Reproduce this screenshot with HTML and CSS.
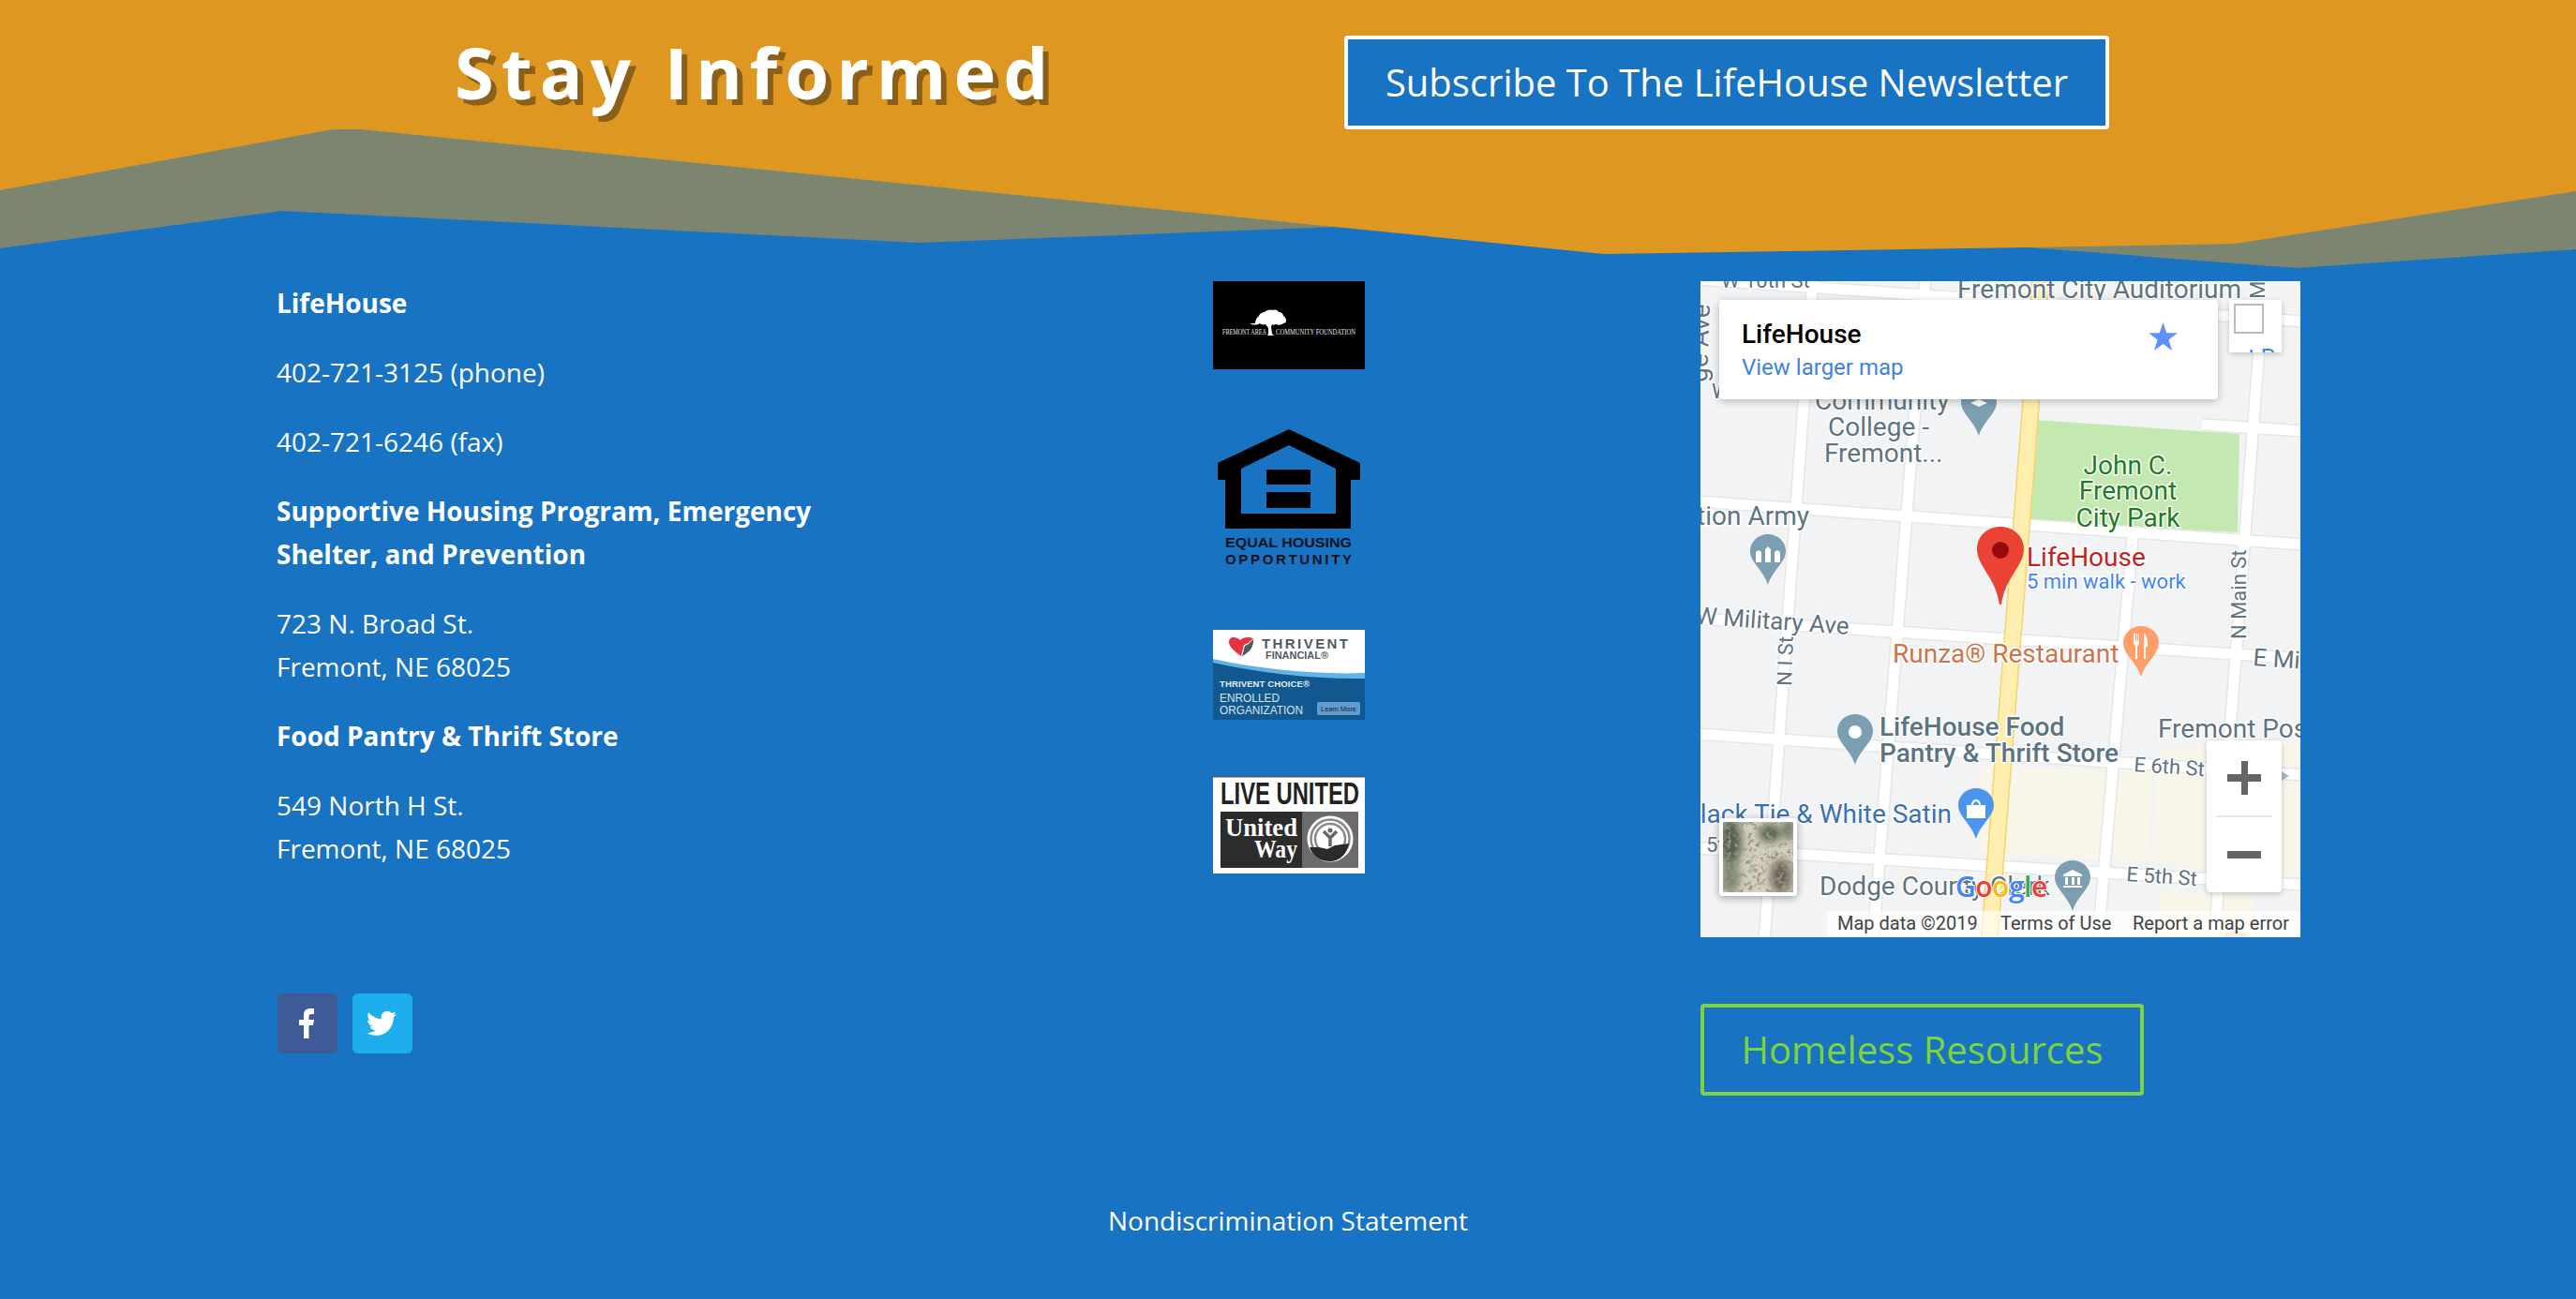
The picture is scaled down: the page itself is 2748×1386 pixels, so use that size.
FILE: index.html
```html
<!DOCTYPE html>
<html lang="en">
<head>
<meta charset="utf-8">
<title>LifeHouse</title>
<link rel="stylesheet" href="styles.css">
</head>
<body>
<header class="hero">
  <svg class="hero-bg" viewBox="0 0 2748 300" preserveAspectRatio="none" aria-hidden="true">
    <rect class="c-orange" width="2748" height="300"/>
    <polygon class="c-gray" points="0,203 355,138 385,138 1374,237 1711,271 2384,260 2748,204 2748,300 0,300"/>
    <polygon class="c-blue" points="0,265 301,225 980,259 1374,244 1600,236 2163,264 2450,286 2748,266 2748,300 0,300"/>
    <polygon class="c-orange" points="1374,237 1711,271 2162,264 2384,260 2384,150 1374,150"/>
  </svg>
  <h1 class="hero-title">Stay Informed</h1>
  <a class="btn btn-subscribe" href="#">Subscribe To The LifeHouse Newsletter</a>
</header>

<main class="columns">
  <section class="col-text">
    <p><strong>LifeHouse</strong></p>
    <p>402-721-3125 (phone)</p>
    <p>402-721-6246 (fax)</p>
    <p><strong>Supportive Housing Program, Emergency Shelter, and Prevention</strong></p>
    <p>723 N. Broad St.<br>Fremont, NE 68025</p>
    <p><strong>Food Pantry &amp; Thrift Store</strong></p>
    <p>549 North H St.<br>Fremont, NE 68025</p>
    <ul class="social">
      <li class="social-item fb">
        <svg viewBox="0 0 64 64"><path class="white" d="M28 48V34h-5v-6h5v-5c0-5 3-7 7-7h4v6h-3c-2 0-2.500 1-2.500 2.500V28H39l-1 6h-4.500v14z"/></svg>
      </li>
      <li class="social-item tw">
        <svg viewBox="0 0 64 64"><path class="white" transform="translate(15 16) scale(1.333)" d="M23.953 4.570a10 10 0 01-2.825.775 4.958 4.958 0 002.163-2.723c-.951.555-2.005.959-3.127 1.184a4.920 4.920 0 00-8.384 4.482C7.690 8.095 4.067 6.130 1.640 3.162a4.822 4.822 0 00-.666 2.475c0 1.710.870 3.213 2.188 4.096a4.904 4.904 0 01-2.228-.616v.060a4.923 4.923 0 003.946 4.827 4.996 4.996 0 01-2.212.085 4.936 4.936 0 004.604 3.417 9.867 9.867 0 01-6.102 2.105c-.390 0-.779-.023-1.170-.067a13.995 13.995 0 007.557 2.209c9.053 0 13.998-7.496 13.998-13.985 0-.210 0-.420-.015-.630A9.935 9.935 0 0024 4.590z"/></svg>
      </li>
    </ul>
  </section>

  <section class="col-logos">
    <svg class="logo logo-fremont" viewBox="0 0 162 94">
      <rect width="162" height="94"/>
      <g class="white">
        <path d="M45 45c0-4 2-6 4-8 1-3 4-4 6-4 2-2 6-3 9-2 3-1 5 0 6 2 3 0 5 2 5 4 2 1 3 3 3 5 0 2-1 3-3 3-2 2-5 2-8 1-2 1-3 1-4 0l-1 3 1 7 2 2h-7l1-2 0-6-3-4c-3 1-5 0-6-1-3 2-8 2-10 0-1 1-1 1-1 0z"/>
        <text class="fr-text" x="10" y="57" textLength="47" lengthAdjust="spacingAndGlyphs">FREMONT AREA</text>
        <text class="fr-text" x="67" y="57" textLength="85" lengthAdjust="spacingAndGlyphs">COMMUNITY FOUNDATION</text>
      </g>
    </svg>

    <svg class="logo logo-eho" viewBox="0 0 162 150">
      <path class="black" fill-rule="evenodd" d="M81 0L157 36V54H147V106H13V54H5V36ZM81 17L30 42V90H131V42ZM57 43H104V59H57ZM57 67H104V84H57Z"/>
      <text class="eho-text" x="13" y="126" textLength="135" lengthAdjust="spacingAndGlyphs">EQUAL HOUSING</text>
      <text class="eho-text" x="13" y="144" textLength="135">OPPORTUNITY</text>
    </svg>

    <svg class="logo logo-thrivent" viewBox="0 0 162 96">
      <rect class="th-white" width="162" height="96"/>
      <path class="th-blue" d="M0 32C50 43 110 50 162 48V96H0Z"/>
      <path class="th-light" d="M0 31C50 42 110 48 162 46V52C110 53 50 46 0 35Z"/>
      <path class="th-red" d="M30 28C24 24 17 18 17 13 17 8 23 6 29 11 32 8 37 7 43 9L38 14 33 16Z"/>
      <path class="th-gray" d="M31 28L34 17 38 15 43 10C44 18 38 25 31 28Z"/>
      <text class="th-name" x="52" y="20" textLength="92">THRIVENT</text>
      <text class="th-fin" x="56" y="31" textLength="67" lengthAdjust="spacingAndGlyphs">FINANCIAL®</text>
      <text class="th-choice" x="7" y="61" textLength="96">THRIVENT CHOICE®</text>
      <text class="th-enr" x="7" y="77" textLength="64" lengthAdjust="spacingAndGlyphs">ENROLLED</text>
      <text class="th-enr" x="7" y="90" textLength="89" lengthAdjust="spacingAndGlyphs">ORGANIZATION</text>
      <rect class="th-btn" x="111" y="77" width="46" height="14" rx="2"/>
      <text class="th-learn" x="115" y="87" textLength="38" lengthAdjust="spacingAndGlyphs">Learn More</text>
    </svg>

    <svg class="logo logo-united" viewBox="0 0 162 104">
      <rect class="white" width="162" height="104"/>
      <rect class="uw-edge" width="162" height="1.500"/>
      <text class="uw-live" x="8" y="30" textLength="148" lengthAdjust="spacingAndGlyphs">LIVE UNITED</text>
      <rect class="uw-dark" x="8" y="38" width="87" height="60"/>
      <rect class="uw-mid" x="95" y="38" width="60" height="60"/>
      <text class="uw-name" x="13" y="64" textLength="77" lengthAdjust="spacingAndGlyphs">United</text>
      <text class="uw-name" x="44" y="87" textLength="46" lengthAdjust="spacingAndGlyphs">Way</text>
      <circle class="white" cx="125" cy="67" r="24.500"/>
      <circle class="uw-arc" cx="125" cy="67" r="20.500"/>
      <circle class="uw-arc" cx="125" cy="67" r="16"/>
      <circle class="white" cx="125" cy="67" r="12"/>
      <path class="uw-hand" d="M103 76H113L122 78 130 74 145 72C143 83 135 91 125 91 114 91 106 85 103 76Z"/>
      <circle class="uw-head" cx="125" cy="58" r="2.500"/>
      <path class="uw-person" d="M118 59L125 66 132 59M125 66V75"/>
    </svg>
  </section>

  <section class="col-map">
    <div class="map">
      <svg class="map-canvas" viewBox="0 0 640 700">
        <defs>
          <g id="roads">
            <line x1="-5" y1="-2" x2="645" y2="43"/>
            <line x1="-5" y1="235" x2="645" y2="281"/>
            <line x1="-5" y1="360" x2="645" y2="403"/>
            <line x1="-5" y1="483" x2="645" y2="527"/>
            <line x1="-5" y1="605" x2="645" y2="644"/>
            <line x1="120" y1="-5" x2="68" y2="705"/>
            <line x1="240" y1="-5" x2="184" y2="705"/>
            <line x1="462" y1="262" x2="424" y2="705"/>
            <line x1="596" y1="70" x2="548" y2="705"/>
            <line x1="535" y1="153" x2="645" y2="160"/>
          </g>
          <path id="pin" d="M19 0C8.500 0 0 8 0 18c0 12 14 20 19 36 5-16 19-24 19-36C38 8 29.500 0 19 0z"/>
        </defs>

        <rect class="m-land" width="640" height="700"/>
        <polygon class="m-built" points="300,517 435,523 430,617 296,610"/>
        <polygon class="m-built" points="445,520 483,523 477,620 440,617"/>
        <polygon class="m-built" points="490,500 640,490 640,640 480,620"/>
        <polygon class="m-built" points="490,650 590,655 590,700 486,700"/>
        <polygon class="m-park" points="356,148 575,163 573,268 348,257"/>
        <use href="#roads" class="m-road-edge"/>
        <use href="#roads" class="m-road"/>
        <line class="m-major-edge" x1="363" y1="-5" x2="308" y2="705"/>
        <line class="m-major" x1="363" y1="-5" x2="308" y2="705"/>
        <polygon class="m-arrow" points="620,523 628,528 620,533"/>

        <text class="m-label m-sm" x="22" y="7">W 10th St</text>
        <text class="m-label" x="274" y="18">Fremont City Auditorium</text>
        <text class="m-label m-sm" transform="translate(602 40) rotate(-90)">N M</text>
        <text class="m-label" transform="translate(7 108) rotate(-88)">ge Ave</text>
        <text class="m-label m-sm" x="12" y="125">W Street</text>
        <text class="m-label" x="122" y="137">Community</text>
        <text class="m-label" x="136" y="165">College -</text>
        <text class="m-label" x="132" y="193">Fremont...</text>
        <g class="m-park-label">
          <text x="456" y="206">John C.</text>
          <text x="456" y="233">Fremont</text>
          <text x="456" y="262">City Park</text>
        </g>
        <text class="m-label m-end" x="116" y="260">Salvation Army</text>
        <text class="m-label m-md m-end" transform="translate(158 377) rotate(4)">W Military Ave</text>
        <text class="m-label m-sm" transform="translate(582 382) rotate(-90)">N Main St</text>
        <text class="m-label m-sm" transform="translate(97 432) rotate(-88)">N I St</text>
        <text class="m-runza" x="205" y="407">Runza® Restaurant</text>
        <text class="m-label m-md" transform="translate(589 410) rotate(4)">E Mi</text>
        <text class="m-label m-bold" x="191" y="485">LifeHouse Food</text>
        <text class="m-label m-bold" x="191" y="513">Pantry &amp; Thrift Store</text>
        <text class="m-label" x="488" y="487">Fremont Post</text>
        <text class="m-label m-sm" transform="translate(462 523) rotate(4)">E 6th St</text>
        <text class="m-shop m-end" x="268" y="578">Black Tie &amp; White Satin</text>
        <text class="m-label m-sm" x="6" y="609">5th</text>
        <text class="m-label" x="127" y="655">Dodge County Clerk</text>
        <text class="m-label m-sm" transform="translate(454 640) rotate(4)">E 5th St</text>
        <text class="m-place" x="348" y="304">LifeHouse</text>
        <text class="m-walk" x="348" y="328">5 min walk - work</text>

        <use href="#pin" class="p-slate" x="278" y="111" width="38" height="52"/>
        <path class="white" d="M288 130l9-4 9 4-9 4z"/>
        <use href="#pin" class="p-slate" x="53" y="270" width="38" height="52"/>
        <path class="white" d="M59 300v-11l3-2 3 2v11zM69 300v-14l3-3 3 3v14zM79 300v-11l3-2 3 2v11z"/>
        <use href="#pin" class="p-orange" x="451" y="368" width="38" height="54"/>
        <path class="white" d="M462 376v10c0 2 2 2.500 2 4v13h2v-13c0-1.500 2-2 2-4v-10h-1v8h-1v-8h-1v8h-1v-8zM473 376c3 1 4 6 4 14h-2v13h-2z"/>
        <use href="#pin" class="p-slate" x="146" y="462" width="38" height="52"/>
        <circle class="white" cx="165" cy="481" r="7"/>
        <use href="#pin" class="p-blue" x="275" y="541" width="38" height="54"/>
        <path class="white" d="M284 559h20v14h-20zM289 559c0-8 10-8 10 0h-2c0-5-6-5-6 0z"/>
        <use href="#pin" class="p-slate" x="378" y="618" width="38" height="52"/>
        <path class="white" d="M397 628l10 5v2h-20v-2zM389 636h3v8h-3zM396 636h3v8h-3zM402 636h3v8h-3zM387 645h20v2h-20z"/>

        <path class="p-red" d="M320 262c-14 0-25 10-25 24 0 18 20 30 24 59h2c4-29 24-41 24-59 0-14-11-24-25-24z"/>
        <circle class="p-red-dot" cx="320" cy="287" r="9"/>

        <use href="#pin" class="p-faint" x="552" y="693" width="38" height="52"/>
        <rect class="m-attr" x="135" y="672" width="505" height="28"/>
        <text class="m-attr-text" x="146" y="692">Map data ©2019</text>
        <text class="m-attr-text" x="320" y="692">Terms of Use</text>
        <text class="m-attr-text" x="461" y="692">Report a map error</text>
        <text class="m-google" x="272" y="657"><tspan class="g-b">G</tspan><tspan class="g-r">o</tspan><tspan class="g-y">o</tspan><tspan class="g-b">g</tspan><tspan class="g-g">l</tspan><tspan class="g-r">e</tspan></text>
      </svg>

      <div class="map-card">
        <div class="map-card-title">LifeHouse</div>
        <div class="map-card-link">View larger map</div>
        <svg class="map-star" viewBox="0 0 31 30"><polygon points="15.500,0 19.300,11.200 31,11.200 21.500,18.500 25,30 15.500,23 6,30 9.500,18.500 0,11.200 11.700,11.200"/></svg>
      </div>
      <div class="map-full"><span class="map-full-box"></span><span class="map-full-peek">t P</span></div>
      <div class="map-zoom">
        <svg viewBox="0 0 80 162"><path class="z-sign" d="M22 36h15V22h7v14h14v8H44v14h-7V44H22zM22 118h36v8H22z"/><rect class="z-div" x="10" y="80" width="60" height="2"/></svg>
      </div>
      <div class="map-thumb">
        <svg viewBox="0 0 75 75">
          <defs>
            <filter id="sat" x="0" y="0" width="100%" height="100%"><feTurbulence type="fractalNoise" baseFrequency="0.22" numOctaves="3" seed="11"/><feColorMatrix values="0 0 0 0 .3  0 0 0 0 .31  0 0 0 0 .25  2.600 2.600 0 0 -2.500"/></filter>
            <filter id="soft" x="-30%" y="-30%" width="160%" height="160%"><feGaussianBlur stdDeviation="4"/></filter>
          </defs>
          <rect class="t-base" width="75" height="75"/>
          <g filter="url(#soft)">
            <ellipse class="t-green" cx="8" cy="22" rx="12" ry="26"/>
            <ellipse class="t-green" cx="50" cy="12" rx="12" ry="10"/>
            <ellipse class="t-green" cx="70" cy="8" rx="5" ry="12"/>
            <ellipse class="t-brown" cx="62" cy="58" rx="11" ry="18"/>
            <ellipse class="t-green-soft" cx="8" cy="58" rx="10" ry="18"/>
          </g>
          <rect width="75" height="75" filter="url(#sat)"/>
        </svg>
      </div>
    </div>
    <a class="btn btn-homeless" href="#">Homeless Resources</a>
  </section>
</main>

<footer class="foot">Nondiscrimination Statement</footer>
</body>
</html>
```

FILE: styles.css
```css
* { box-sizing: border-box; }
html, body { margin: 0; padding: 0; }
body {
  width: 2748px;
  height: 1386px;
  overflow: hidden;
  background: #1873c2;
  color: #fff;
  font-family: "Open Sans", sans-serif;
  font-size: 28px;
  line-height: 46px;
}
.white { fill: #fff; }
.black { fill: #000; }

/* hero */
.hero {
  position: relative;
  height: 290px;
  display: grid;
  grid-template-columns: 949px 816px;
  align-items: start;
  padding-left: 485px;
}
.hero-bg { position: absolute; left: 0; top: 0; width: 2748px; height: 300px; }
.c-orange { fill: #de9822; }
.c-gray { fill: #7c8570; }
.c-blue { fill: #1873c2; }
.hero-title {
  position: relative;
  margin: 27px 0 0;
  font-size: 76px;
  line-height: 100px;
  font-weight: 700;
  letter-spacing: 8px;
  white-space: nowrap;
  text-shadow: 6px 6px 0 #8a5f1a;
}
.btn {
  position: relative;
  display: flex;
  align-items: center;
  justify-content: center;
  height: 100px;
  font-size: 40px;
  text-decoration: none;
  border-radius: 4px;
  white-space: nowrap;
}
.btn-subscribe {
  margin-top: 38px;
  width: 816px;
  border: 4px solid #fff;
  background: #1873c2;
  color: #fff;
}
.btn-homeless {
  margin-top: 71px;
  width: 473px;
  height: 98px;
  border: 4px solid #7ed33a;
  color: #7ed33a;
}

/* columns */
.columns {
  display: grid;
  grid-template-columns: 640px 162px 640px;
  justify-content: space-between;
  padding: 10px 294px 0 295px;
  height: 989px;
}
.col-text p { margin: 0 0 28px; }
.col-text strong { font-weight: 700; }
.social {
  display: flex;
  gap: 16px;
  list-style: none;
  margin: 132px 0 0 1px;
  padding: 0;
}
.social-item { width: 64px; height: 64px; border-radius: 6px; }
.social-item svg { display: block; width: 64px; height: 64px; }
.fb { background: #3e5b98; }
.tw { background: #1eaeee; }

/* logos */
.col-logos { display: flex; flex-direction: column; }
.logo { display: block; width: 162px; flex: none; }
.logo-fremont { height: 94px; margin-bottom: 64px; }
.logo-eho { height: 150px; margin-bottom: 64px; }
.logo-thrivent { height: 96px; margin-bottom: 60px; }
.logo-united { height: 104px; }
.fr-text { font-family: "Liberation Serif", serif; font-size: 7.500px; fill: #e8e8e8; }
.eho-text { font-family: "Liberation Sans", sans-serif; font-weight: 700; font-size: 15px; fill: #06121e; }
.th-white { fill: #fff; }
.th-blue { fill: #10588f; }
.th-light { fill: #62b4e4; }
.th-red { fill: #e5343f; }
.th-gray { fill: #4e5a62; }
.th-name { font-family: "Liberation Sans", sans-serif; font-weight: 700; font-size: 15px; fill: #4e5a62; }
.th-fin { font-family: "Liberation Sans", sans-serif; font-weight: 700; font-size: 11px; fill: #4e5a62; }
.th-choice { font-family: "Liberation Sans", sans-serif; font-weight: 700; font-size: 9.500px; fill: #e6eef5; }
.th-enr { font-family: "Liberation Sans", sans-serif; font-size: 13px; fill: #d7e5f0; }
.th-btn { fill: #5f9ccd; }
.th-learn { font-family: "Liberation Sans", sans-serif; font-size: 8px; fill: #123; }
.uw-edge { fill: #555; }
.uw-live { font-family: "Liberation Sans", sans-serif; font-weight: 700; font-size: 33px; fill: #222; }
.uw-dark { fill: #2c2c2c; }
.uw-mid { fill: #6b6b6b; }
.uw-name { font-family: "Liberation Serif", serif; font-weight: 700; font-size: 27px; fill: #fff; }
.uw-arc { fill: none; stroke: #8a8a8a; stroke-width: 2.500px; }
.uw-hand { fill: #2a2a2a; }
.uw-head { fill: #666; }
.uw-person { fill: none; stroke: #666; stroke-width: 3.500px; }

/* map */
.map {
  position: relative;
  width: 640px;
  height: 700px;
  overflow: hidden;
}
.map-canvas { display: block; width: 640px; height: 700px; font-family: Roboto, sans-serif; }
.m-land { fill: #f1f3f4; }
.m-built { fill: #f8f5e9; }
.m-park { fill: #c3e9b1; }
.m-road-edge { stroke: #e4e6e8; stroke-width: 14px; fill: none; }
.m-road { stroke: #fff; stroke-width: 11px; fill: none; }
.m-major-edge { stroke: #f8d26b; stroke-width: 19px; }
.m-major { stroke: #feefb0; stroke-width: 16px; }
.m-arrow { fill: #aab4d0; }
.m-label, .m-runza, .m-shop, .m-place, .m-walk, .m-park-label text {
  paint-order: stroke;
  stroke: #fff;
  stroke-width: 3px;
  stroke-linejoin: round;
}
.m-label { font-size: 28px; fill: #5f7380; }
.m-md { font-size: 26px; }
.m-sm { font-size: 22px; }
.m-bold { fill: #5a7484; font-weight: 500; }
.m-end { text-anchor: end; }
.m-park-label { font-size: 28px; fill: #1e7d23; text-anchor: middle; }
.m-runza { font-size: 28px; fill: #c9764c; }
.m-shop { font-size: 28px; fill: #3a70b5; }
.m-place { font-size: 28px; fill: #c5221f; }
.m-walk { font-size: 22px; fill: #4285f4; }
.p-slate { fill: #7b9eb0; }
.p-orange { fill: #ff9e67; }
.p-blue { fill: #4a96ef; }
.p-faint { fill: #f6c5a8; }
.p-red { fill: #ea4335; }
.p-red-dot { fill: #960a0a; }
.m-attr { fill: rgba(255, 255, 255, .65); }
.m-attr-text { font-size: 20px; fill: #444; }
.m-google {
  font-family: "Open Sans", sans-serif;
  font-size: 30px;
  font-weight: 600;
  paint-order: stroke;
  stroke: #fff;
  stroke-width: 2px;
  letter-spacing: -.5px;
}
.g-b { fill: #4285f4; }
.g-r { fill: #ea4335; }
.g-y { fill: #fbbc05; }
.g-g { fill: #34a853; }

.map-card {
  position: absolute;
  left: 20px;
  top: 20px;
  width: 532px;
  height: 106px;
  padding: 19px 24px;
  background: #fff;
  border-radius: 4px;
  box-shadow: 0 2px 8px rgba(0, 0, 0, .25);
  font-family: Roboto, sans-serif;
}
.map-card-title { font-size: 28px; font-weight: 500; line-height: 35px; color: #000; }
.map-card-link { margin-top: 1px; font-size: 24px; line-height: 34px; color: #3f83e2; }
.map-star {
  position: absolute;
  left: 458px;
  top: 24px;
  width: 31px;
  height: 30px;
  fill: #5f90fb;
}
.map-full {
  position: absolute;
  left: 564px;
  top: 20px;
  width: 56px;
  height: 56px;
  padding: 4px 5px;
  overflow: hidden;
  background: #fff;
  border-radius: 2px;
  box-shadow: 0 2px 6px rgba(0, 0, 0, .2);
}
.map-full-box { display: block; width: 32px; height: 32px; border: 2px solid #bbb; }
.map-full-peek {
  position: absolute;
  left: 20px;
  top: 49px;
  font-family: Roboto, sans-serif;
  font-size: 24px;
  line-height: 24px;
  color: #3f83e2;
}
.map-zoom {
  position: absolute;
  left: 540px;
  top: 490px;
  width: 80px;
  height: 162px;
  background: #fff;
  border-radius: 4px;
  box-shadow: 0 2px 6px rgba(0, 0, 0, .2);
}
.map-zoom svg { display: block; width: 80px; height: 162px; }
.z-sign { fill: #666; }
.z-div { fill: #e6e6e6; }
.map-thumb {
  position: absolute;
  left: 20px;
  top: 573px;
  width: 83px;
  height: 83px;
  border: 4px solid #fff;
  border-radius: 4px;
  box-shadow: 0 2px 8px rgba(0, 0, 0, .35);
}
.map-thumb svg { display: block; width: 75px; height: 75px; }
.t-base { fill: #d6d0bc; }
.t-green { fill: #53614c; }
.t-green-soft { fill: #7c8570; }
.t-brown { fill: #6e5f55; }

/* footer */
.foot { text-align: center; }
```
